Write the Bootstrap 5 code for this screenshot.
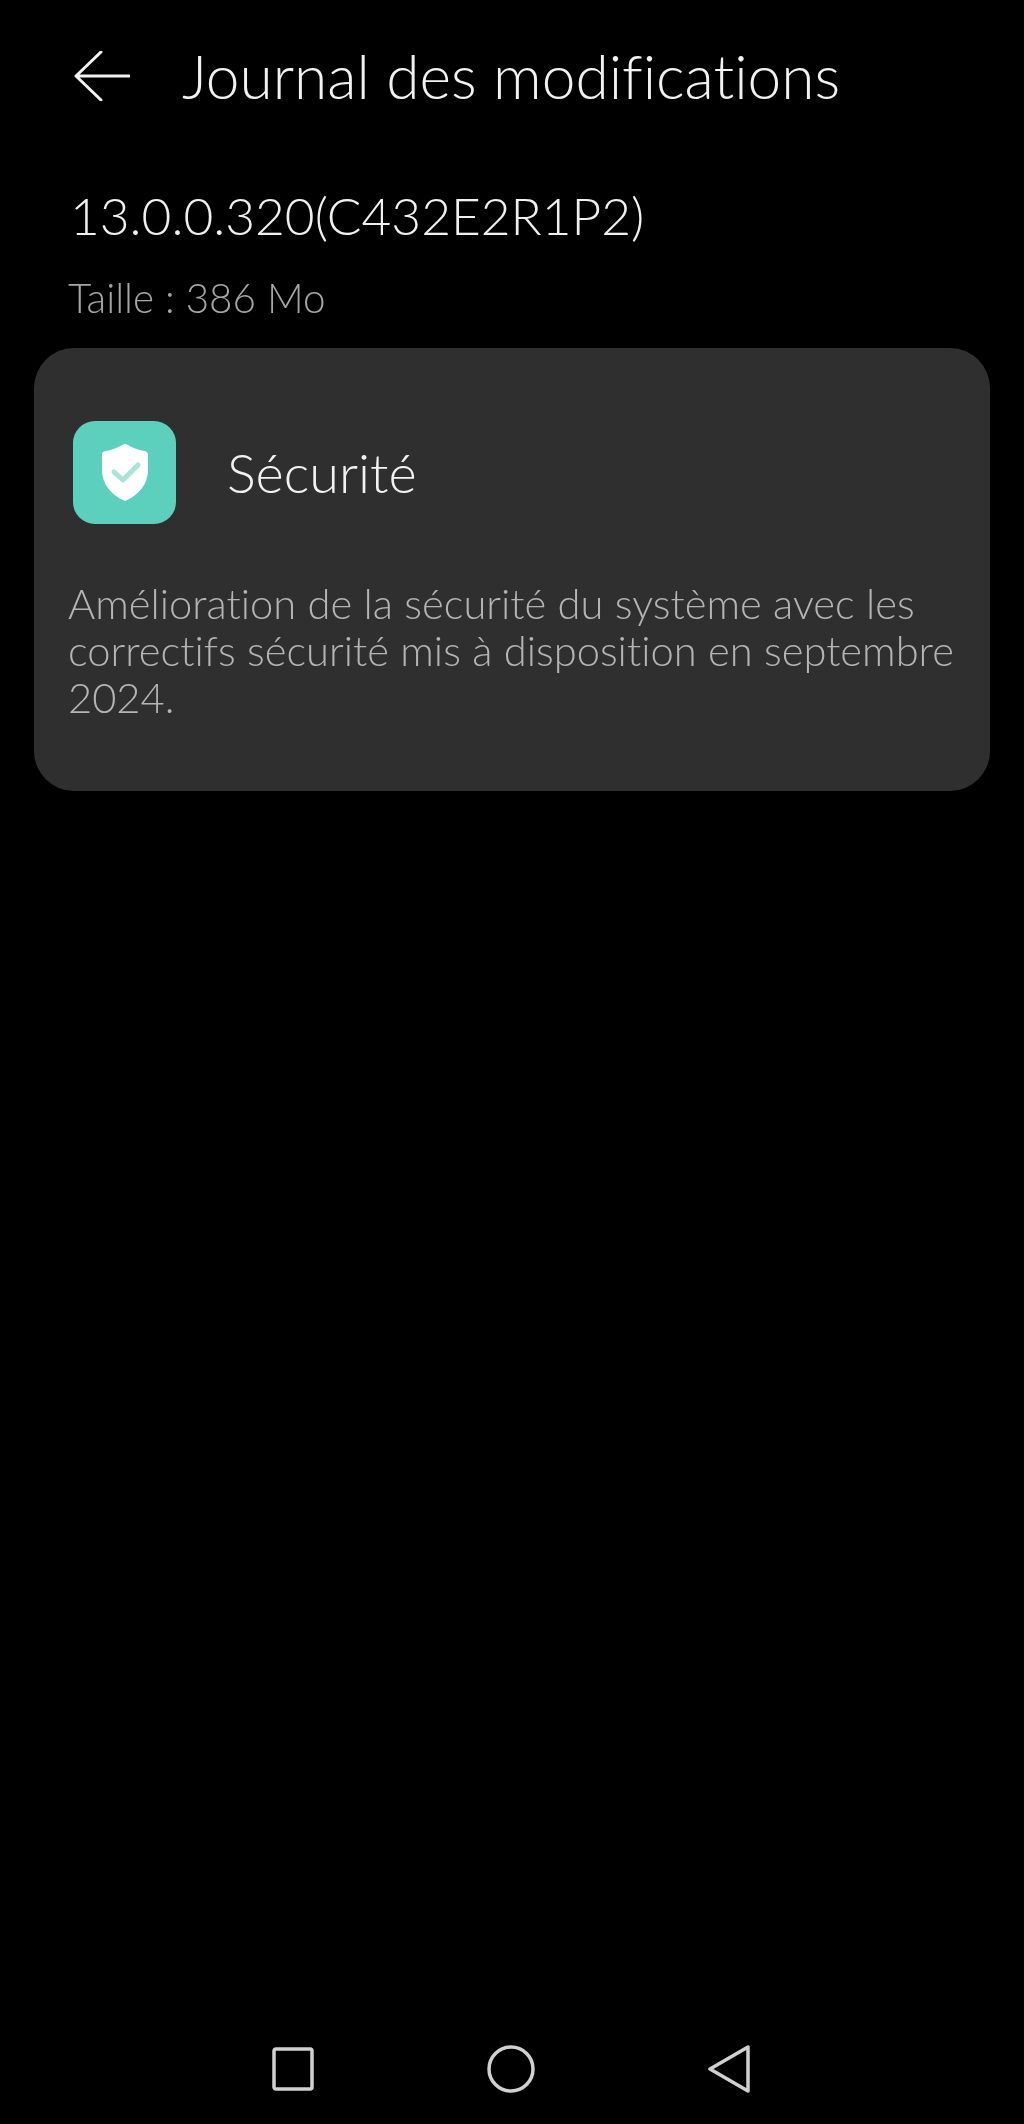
<!DOCTYPE html>
<html lang="fr">
<head>
  <meta charset="UTF-8">
  <meta name="viewport" content="width=device-width, initial-scale=1.0">
  <link rel="stylesheet" href="https://cdn.jsdelivr.net/npm/bootstrap@5.3.2/dist/css/bootstrap.min.css">
  <title>Journal des modifications</title>
  <style>
    body {
      background: #000;
      font-family: Lato, "Liberation Sans", sans-serif;
      font-weight: 300;
      font-variant-ligatures: none;
    }
    .app-screen { height: 2124px; will-change: transform; }
    .top-bar { padding: 51px 0 0 74px; height: 100px; gap: 52px; }
    .page-title { font-size: 60.4px; line-height: 50px; font-weight: 300; color: #f2f2f2; }
    .version-label { margin: 90px 0 0 70px; font-size: 51.4px; line-height: 50px; color: #f0f0f0; }
    .size-label { margin: 36px 0 0 68px; font-size: 40.4px; line-height: 44px; color: #a6a6a6; }
    .update-panel {
      margin: 28px 34px 0;
      height: 443px;
      padding: 73px 30px 0 34px;
      background: #2f2f2f;
      border-radius: 40px;
    }
    .app-tile {
      width: 103px;
      height: 103px;
      margin-left: 5px;
      background: #5dd0bd;
      border-radius: 22px;
    }
    .panel-head { gap: 51px; }
    .panel-title { font-size: 54px; line-height: 60px; color: #f2f2f2; }
    .panel-text { margin: 56px 0 0; font-size: 41.7px; line-height: 47px; color: #b4b4b4; }
    .nav-keys { padding: 0 274px 16px 272px; height: 94px; }
  </style>
</head>
<body>
  <div class="app-screen d-flex flex-column">
    <div class="top-bar d-flex align-items-center">
      <svg width="56" height="50" viewBox="0 0 56 50" fill="none" stroke="#f2f2f2" stroke-width="3" stroke-linecap="round" stroke-linejoin="round">
        <path d="M55 25H2M27 1 2 25l25 24"/>
      </svg>
      <div class="page-title">Journal des modifications</div>
    </div>

    <div class="version-label">13.0.0.320(C432E2R1P2)</div>
    <div class="size-label">Taille : 386 Mo</div>

    <div class="update-panel">
      <div class="panel-head d-flex align-items-center">
        <div class="app-tile d-flex align-items-center justify-content-center flex-shrink-0">
          <svg width="46" height="57" viewBox="0 0 46 57">
            <path fill="#fff" d="M20.5.8c1.600-1 3.400-1 5 0C30 3.700 35.500 5.800 42.500 7c2.200.4 3.500 1.800 3.500 4v15c0 14-8.500 24.500-23 31C8.500 50.500 0 40 0 26V11c0-2.200 1.300-3.600 3.500-4C10.500 5.800 16 3.700 20.500.8z"/>
            <path fill="none" stroke="#a9e4d9" stroke-width="5" stroke-linecap="round" stroke-linejoin="round" d="M12 28l9 8 15-15"/>
          </svg>
        </div>
        <div class="panel-title">Sécurité</div>
      </div>
      <p class="panel-text">Amélioration de la sécurité du système avec les correctifs sécurité mis à disposition en septembre 2024.</p>
    </div>

    <div class="nav-keys mt-auto d-flex justify-content-between align-items-center">
      <svg width="42" height="44" viewBox="0 0 42 44" fill="none" stroke="#d0d0d0" stroke-width="3.5" stroke-linejoin="round">
        <rect x="2" y="2" width="38" height="40" rx="2"/>
      </svg>
      <svg width="48" height="48" viewBox="0 0 48 48" fill="none" stroke="#d0d0d0" stroke-width="3.5">
        <circle cx="24" cy="24" r="22"/>
      </svg>
      <svg width="42" height="48" viewBox="0 0 42 48" fill="none" stroke="#d0d0d0" stroke-width="3.5" stroke-linejoin="round">
        <path d="M40 2V46L2 24z"/>
      </svg>
    </div>
  </div>
  <script src="https://cdn.jsdelivr.net/npm/bootstrap@5.3.2/dist/js/bootstrap.bundle.min.js"></script>
</body>
</html>
